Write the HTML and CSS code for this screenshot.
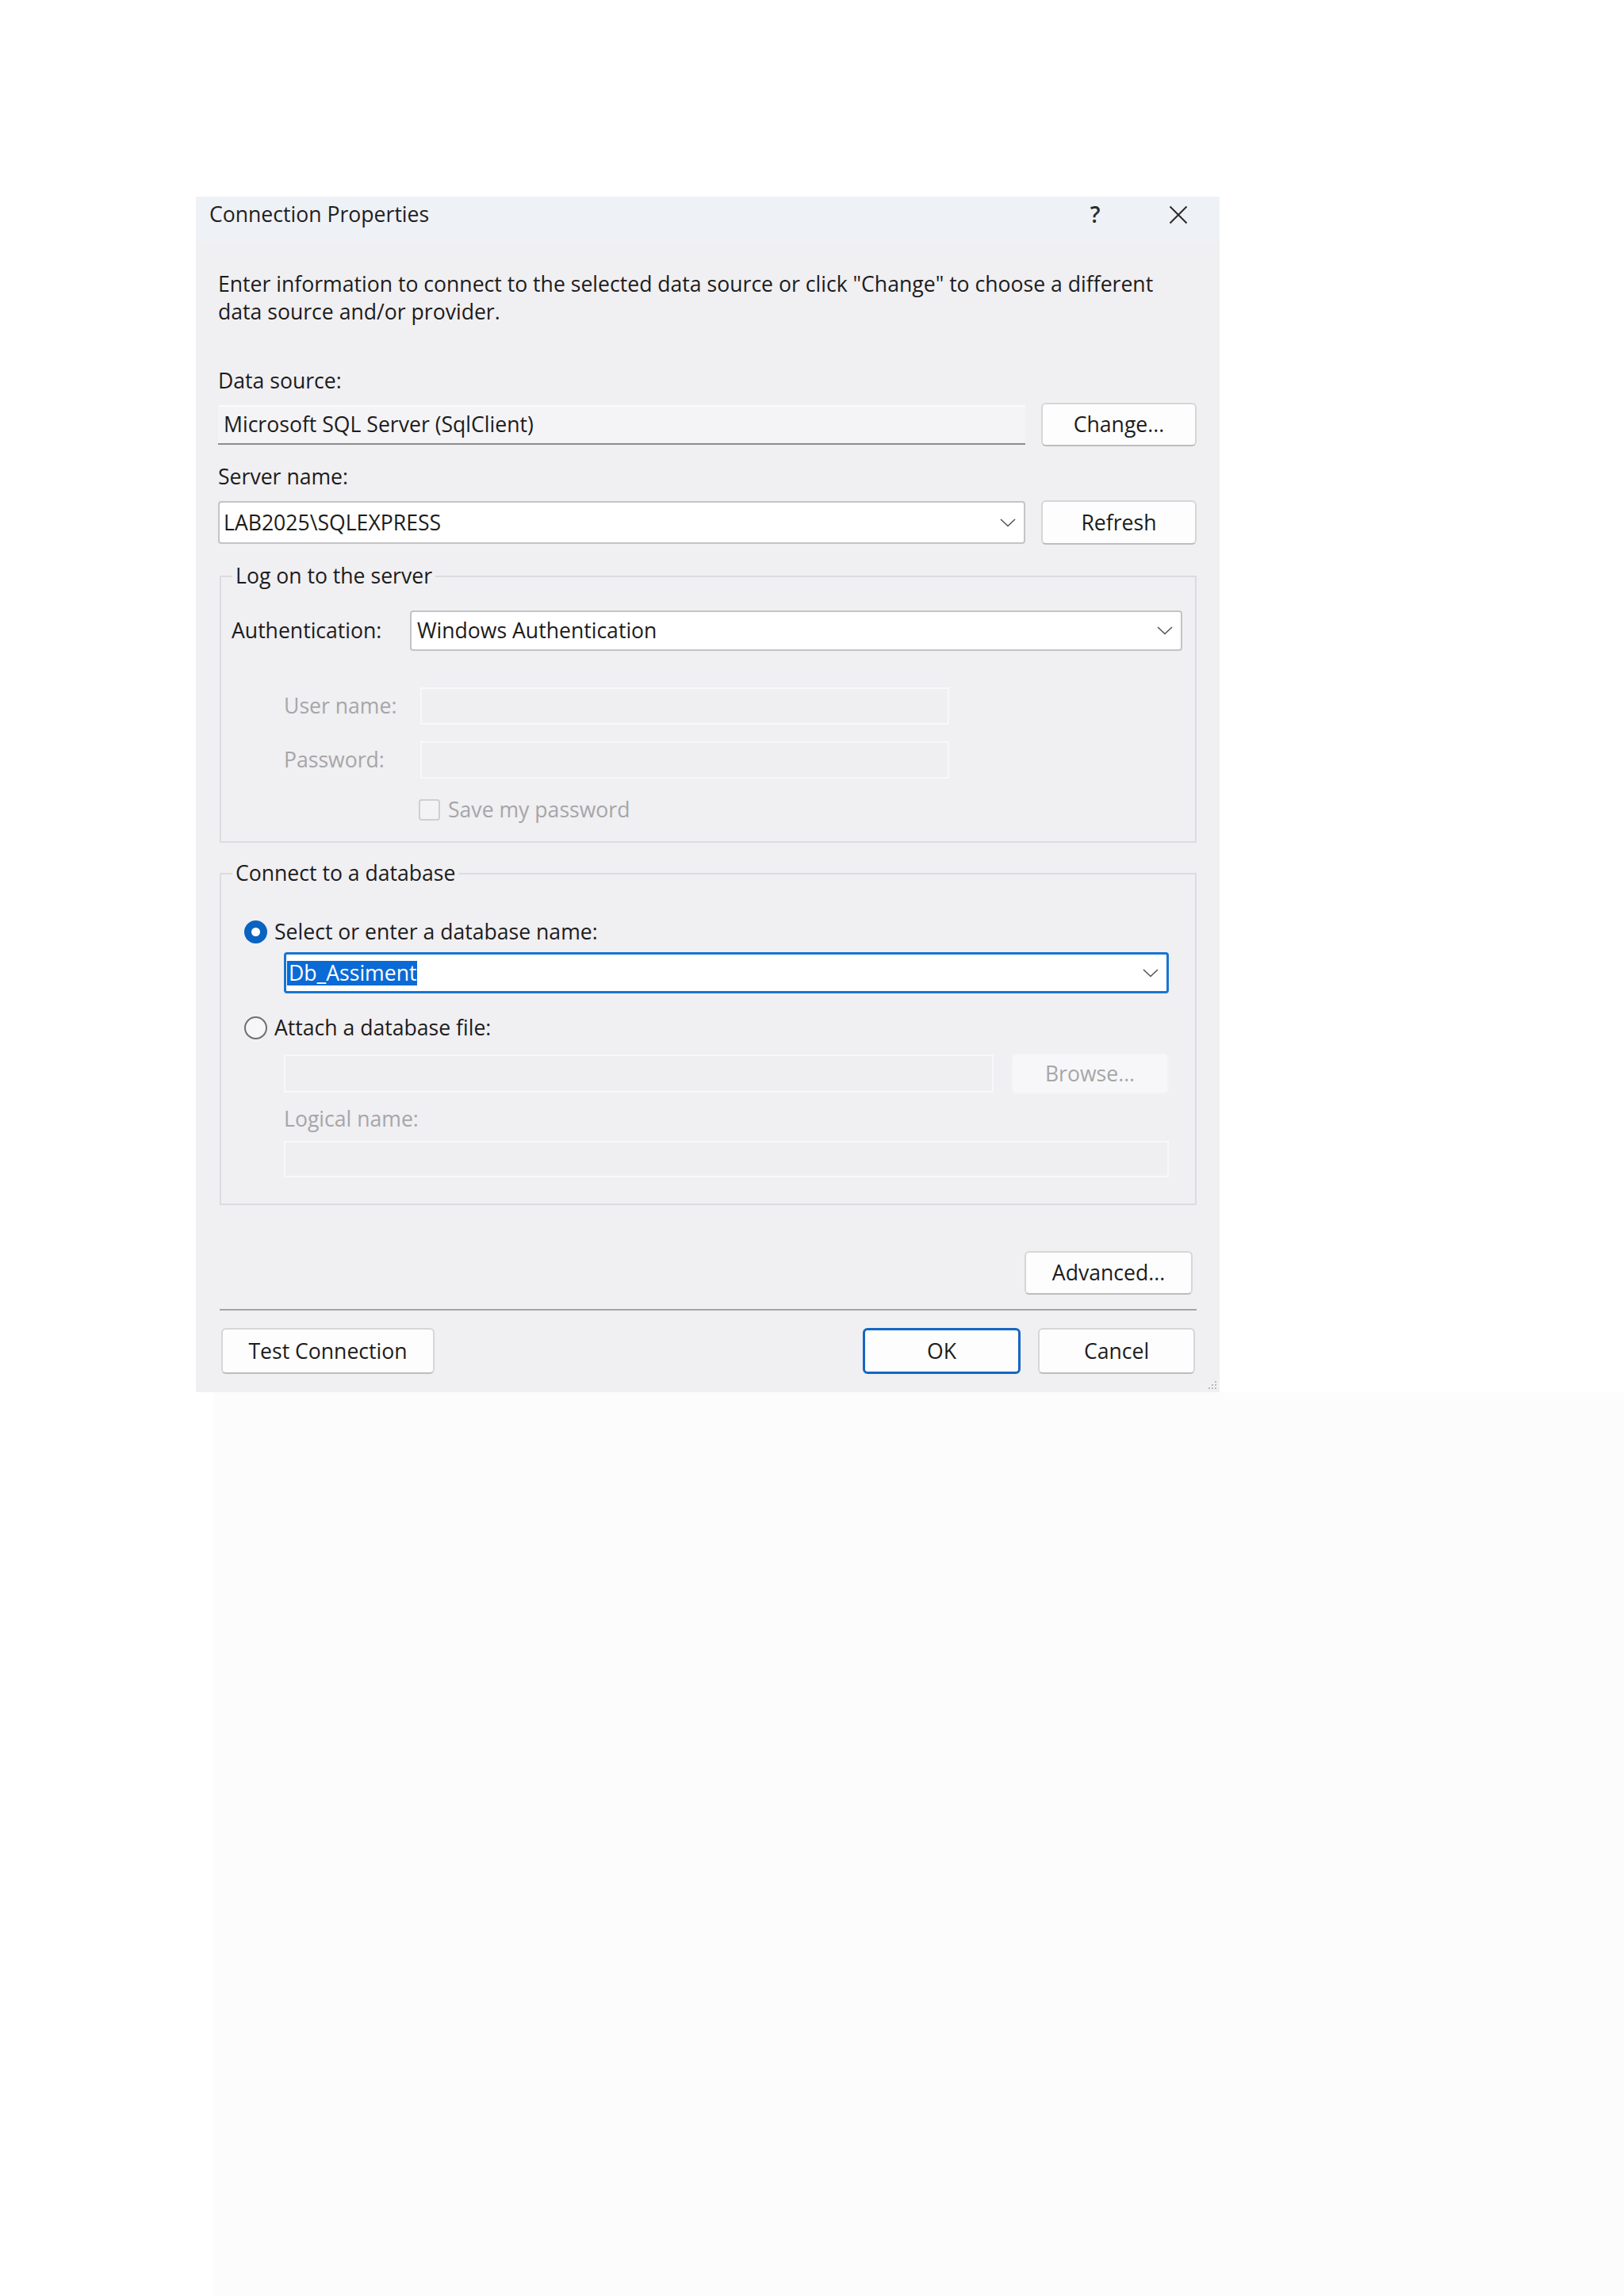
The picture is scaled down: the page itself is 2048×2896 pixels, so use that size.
FILE: index.html
```html
<!DOCTYPE html>
<html lang="en">
<head>
<meta charset="utf-8">
<title>Connection Properties</title>
<link rel="stylesheet" href="styles.css">
</head>
<body>
<div class="page">
  <div class="dialog">
    <div class="titlebar">
      <span class="title">Connection Properties</span>
      <span class="tb-btn help">?</span>
      <span class="tb-btn close">
        <svg width="24" height="24" viewBox="0 0 24 24"><path d="M1.5 1.5 L22.5 22.5 M22.5 1.5 L1.5 22.5" stroke="#2b2b2b" stroke-width="2" fill="none"/></svg>
      </span>
    </div>
    <div class="content">
      <p class="desc">Enter information to connect to the selected data source or click "Change" to choose a different<br>data source and/or provider.</p>

      <div class="label lbl-ds">Data source:</div>
      <div class="row row-ds">
        <div class="ro-field">Microsoft SQL Server (SqlClient)</div>
        <div class="btn btn-side btn-change">Change...</div>
      </div>

      <div class="label lbl-sn">Server name:</div>
      <div class="row row-sn">
        <div class="combo combo-sn"><span class="combo-text">LAB2025\SQLEXPRESS</span>
          <svg class="chev" width="20" height="11" viewBox="0 0 20 11"><polyline points="1,1 10,9.5 19,1" fill="none" stroke="#555" stroke-width="1.6"/></svg>
        </div>
        <div class="btn btn-side btn-refresh">Refresh</div>
      </div>

      <div class="group group-logon">
        <div class="legend">Log on to the server</div>
        <div class="auth-row">
          <span class="auth-label">Authentication:</span>
          <div class="combo combo-auth"><span class="combo-text">Windows Authentication</span>
            <svg class="chev" width="20" height="11" viewBox="0 0 20 11"><polyline points="1,1 10,9.5 19,1" fill="none" stroke="#555" stroke-width="1.6"/></svg>
          </div>
        </div>
        <div class="cred-row cred-user">
          <span class="cred-label disabled">User name:</span>
          <div class="dis-field cred-field"></div>
        </div>
        <div class="cred-row cred-pass">
          <span class="cred-label disabled">Password:</span>
          <div class="dis-field cred-field"></div>
        </div>
        <div class="check-row">
          <span class="checkbox"></span>
          <span class="disabled">Save my password</span>
        </div>
      </div>

      <div class="group group-db">
        <div class="legend">Connect to a database</div>
        <div class="radio-row radio-first">
          <span class="radio checked"></span>
          <span>Select or enter a database name:</span>
        </div>
        <div class="indent">
          <div class="combo combo-db"><span class="combo-text"><span class="sel">Db_Assiment</span></span>
            <svg class="chev" width="20" height="11" viewBox="0 0 20 11"><polyline points="1,1 10,9.5 19,1" fill="none" stroke="#555" stroke-width="1.6"/></svg>
          </div>
        </div>
        <div class="radio-row radio-second">
          <span class="radio"></span>
          <span>Attach a database file:</span>
        </div>
        <div class="indent">
          <div class="file-row">
            <div class="dis-field file-field"></div>
            <div class="btn btn-disabled btn-browse">Browse...</div>
          </div>
          <div class="disabled lbl-logical">Logical name:</div>
          <div class="dis-field logical-field"></div>
        </div>
      </div>

      <div class="adv-row">
        <div class="btn btn-adv">Advanced...</div>
      </div>

      <div class="separator"></div>

      <div class="footer">
        <div class="btn btn-test">Test Connection</div>
        <div class="footer-right">
          <div class="btn btn-ok">OK</div>
          <div class="btn btn-cancel">Cancel</div>
        </div>
      </div>
    </div>
    <svg class="grip" width="12" height="12" viewBox="0 0 12 12">
      <rect x="9" y="1" width="2" height="2" fill="#b8b8b8"/>
      <rect x="5" y="5" width="2" height="2" fill="#b8b8b8"/>
      <rect x="9" y="5" width="2" height="2" fill="#b8b8b8"/>
      <rect x="1" y="9" width="2" height="2" fill="#b8b8b8"/>
      <rect x="5" y="9" width="2" height="2" fill="#b8b8b8"/>
      <rect x="9" y="9" width="2" height="2" fill="#b8b8b8"/>
    </svg>
  </div>
  <div class="below"></div>
</div>
</body>
</html>
```

FILE: styles.css
```css
* {
  box-sizing: border-box;
}

html, body {
  margin: 0;
  padding: 0;
  background: #ffffff;
}

body {
  font-family: "Open Sans", "Noto Sans", "Liberation Sans", sans-serif;
  font-size: 26.6px;
  line-height: 35px;
  color: #1c1c1c;
}

.page {
  min-height: 2896px;
  padding: 248px 0 0 247px;
  display: flex;
  flex-direction: column;
}

.dialog {
  position: relative;
  width: 1291px;
  height: 1508px;
  background: #f0eff2;
  display: flex;
  flex-direction: column;
}

.below {
  flex: 1;
  margin-left: 23px;
  background: #fcfcfd;
}

/* title bar */
.titlebar {
  height: 57px;
  background: #eef1f6;
  display: flex;
  align-items: center;
  padding-left: 17px;
  padding-right: 22px;
  padding-bottom: 12px;
}

.title {
  color: #1f1f1f;
}

.tb-btn {
  width: 60px;
  height: 40px;
  display: flex;
  align-items: center;
  justify-content: center;
}

.help {
  margin-left: auto;
  color: #2b2b2b;
  font-size: 28px;
  font-weight: 600;
}

.close {
  margin-left: 45px;
}

/* content */
.content {
  padding: 0 29px 0 28px;
  display: flex;
  flex-direction: column;
}

.desc {
  margin: 36px 0 0 0;
}

.label {
  line-height: 35px;
}

.lbl-ds {
  margin-top: 52px;
}

.lbl-sn {
  margin-top: 21px;
}

.row {
  display: flex;
  align-items: center;
  gap: 20px;
}

.row-ds {
  margin-top: 10px;
  height: 55px;
}

.row-sn {
  margin-top: 12px;
  height: 56px;
}

.ro-field {
  flex: 1;
  height: 50px;
  background: #f4f3f6;
  border-top: 2px solid #fafafb;
  border-bottom: 2px solid #8d8d8d;
  padding-left: 7px;
  display: flex;
  align-items: center;
}

.combo {
  background: #ffffff;
  border: 2px solid #c4c4c6;
  border-radius: 4px;
  display: flex;
  align-items: center;
  padding-right: 10px;
}

.combo-text {
  flex: 1;
}

.combo-sn {
  flex: 1;
  height: 54px;
  padding-left: 5px;
}

.chev {
  display: block;
}

/* buttons */
.btn {
  background: #fdfdfd;
  border: 2px solid #d6d6d8;
  border-bottom-color: #bdbdc0;
  border-radius: 6px;
  display: flex;
  align-items: center;
  justify-content: center;
  color: #1c1c1c;
}

.btn-side {
  width: 196px;
}

.btn-change {
  height: 55px;
}

.btn-refresh {
  height: 56px;
}

/* groups */
.group {
  margin-left: 2px;
  border: 2px solid #dcdbdf;
  display: flex;
  flex-direction: column;
}

.legend {
  width: max-content;
  margin-top: -19px;
  margin-left: 14px;
  padding: 0 4px;
  background: #f0eff2;
}

.group-logon {
  margin-top: 39px;
  padding-bottom: 26px;
}

.auth-row {
  margin-top: 26px;
  padding-left: 13px;
  padding-right: 16px;
  display: flex;
  align-items: center;
}

.auth-label {
  width: 225px;
}

.combo-auth {
  flex: 1;
  height: 51px;
  padding-left: 7px;
}

.cred-row {
  display: flex;
  align-items: center;
  margin-left: 79px;
}

.cred-user {
  margin-top: 46px;
}

.cred-pass {
  margin-top: 21px;
}

.cred-label {
  width: 172px;
}

.disabled {
  color: #a6a6a8;
}

.dis-field {
  background: #efeef1;
  border: 2px solid #f8f8fa;
}

.cred-field {
  width: 667px;
  height: 47px;
}

.check-row {
  margin-top: 25px;
  margin-left: 249px;
  display: flex;
  align-items: center;
  gap: 10px;
  height: 28px;
}

.checkbox {
  width: 27px;
  height: 27px;
  border: 2px solid #cfcfd2;
  border-radius: 4px;
  background: #f3f3f5;
}

.group-db {
  margin-top: 38px;
  padding-left: 29px;
  padding-right: 33px;
  padding-bottom: 33px;
}

.group-db .legend {
  margin-left: -15px;
}

.radio-row {
  display: flex;
  align-items: center;
  gap: 9px;
  height: 35px;
}

.radio-first {
  margin-top: 39px;
}

.radio-second {
  margin-top: 26px;
}

.radio {
  width: 29px;
  height: 29px;
  border-radius: 50%;
  border: 2px solid #6f6f72;
  background: #f6f6f8;
}

.radio.checked {
  border: 9px solid #0b63c1;
  background: #ffffff;
}

.indent {
  margin-left: 50px;
  display: flex;
  flex-direction: column;
}

.combo-db {
  margin-top: 8px;
  height: 52px;
  border: 3px solid #1a74d2;
  padding-left: 1px;
}

.sel {
  background: #0a6ad6;
  color: #ffffff;
  padding: 0 1px 0 2px;
  display: inline-block;
  line-height: 31px;
}

.file-row {
  margin-top: 14px;
  display: flex;
  align-items: center;
  gap: 22px;
  height: 52px;
}

.file-field {
  width: 895px;
  height: 48px;
}

.btn-disabled {
  background: #f7f7f9;
  border: 2px solid #f2f2f4;
  color: #a6a6a8;
}

.btn-browse {
  flex: 1;
  height: 52px;
}

.lbl-logical {
  margin-top: 14px;
}

.logical-field {
  margin-top: 10px;
  height: 46px;
}

/* bottom */
.adv-row {
  margin-top: 58px;
  display: flex;
  justify-content: flex-end;
  padding-right: 5px;
}

.btn-adv {
  width: 212px;
  height: 55px;
}

.separator {
  margin-top: 18px;
  margin-left: 2px;
  height: 2px;
  background: #a4a4a6;
}

.footer {
  margin-top: 22px;
  display: flex;
  align-items: center;
  padding-left: 4px;
  padding-right: 2px;
}

.btn-test {
  width: 269px;
  height: 58px;
}

.footer-right {
  margin-left: auto;
  display: flex;
  gap: 22px;
}

.btn-ok {
  width: 199px;
  height: 58px;
  border: 3px solid #1467c2;
}

.btn-cancel {
  width: 198px;
  height: 58px;
}

.grip {
  position: absolute;
  right: 3px;
  bottom: 3px;
}
```
